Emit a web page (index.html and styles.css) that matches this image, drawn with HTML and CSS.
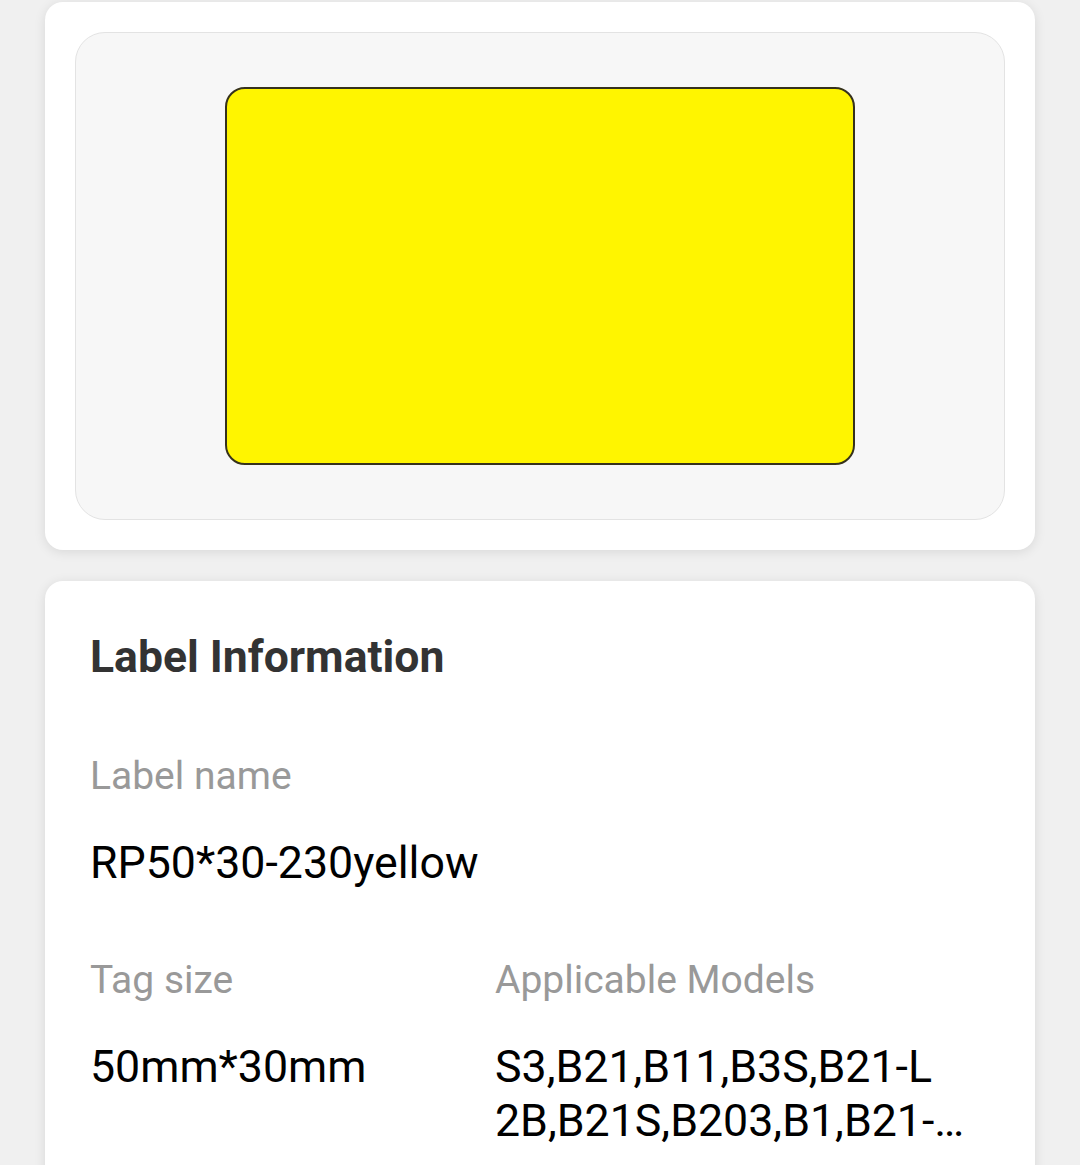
FILE: index.html
```html
<!DOCTYPE html>
<html lang="en">
<head>
<meta charset="utf-8">
<title>Label Information</title>
<link rel="stylesheet" href="styles.css">
</head>
<body>
<main class="page">
  <section class="card preview-card">
    <div class="preview-box">
      <div class="label-shape"></div>
    </div>
  </section>
  <section class="card info-card">
    <h2 class="info-title">Label Information</h2>
    <div class="field">
      <div class="field-label">Label name</div>
      <div class="field-value">RP50*30-230yellow</div>
    </div>
    <div class="field-row">
      <div class="field">
        <div class="field-label">Tag size</div>
        <div class="field-value">50mm*30mm</div>
      </div>
      <div class="field">
        <div class="field-label">Applicable Models</div>
        <div class="field-value models">
          <span class="models-line">S3,B21,B11,B3S,B21-L</span>
          <span class="models-line models-last">2B,B21S,B203,B1,B21-C2B,B21 Pro,B1 Pro</span>
        </div>
      </div>
    </div>
  </section>
</main>
</body>
</html>
```
FILE: styles.css
```css
html, body {
  margin: 0;
  padding: 0;
}
body {
  background: #f0f0f0;
  font-family: Roboto, "Noto Sans", "Liberation Sans", sans-serif;
}
.page {
  padding: 2px 45px 0;
  display: flex;
  flex-direction: column;
  gap: 31px;
}
.card {
  background: #ffffff;
  border-radius: 18px;
  box-shadow: 0 2px 12px rgba(0, 0, 0, 0.1);
}
.preview-card {
  padding: 30px;
}
.preview-box {
  height: 488px;
  box-sizing: border-box;
  border: 1px solid #e3e3e3;
  border-radius: 30px;
  background: #f7f7f7;
  display: flex;
  align-items: center;
  justify-content: center;
}
.label-shape {
  width: 630px;
  height: 378px;
  box-sizing: border-box;
  border: 2px solid #36321c;
  border-radius: 20px;
  background: #fff500;
}
.info-card {
  padding: 49px 45px 60px;
}
.info-title {
  margin: 0 0 69px;
  font-size: 44.5px;
  line-height: 54px;
  font-weight: 700;
  color: #333333;
}
.field-label {
  font-size: 39px;
  line-height: 46px;
  color: #999999;
}
.field-value {
  margin-top: 37px;
  font-size: 44.7px;
  line-height: 54px;
  color: #000000;
}
.field-row {
  margin-top: 67px;
  display: grid;
  grid-template-columns: 405px 470px;
}
.models {
  display: flex;
  flex-direction: column;
}
.models-line {
  display: block;
  white-space: nowrap;
  overflow: hidden;
  text-overflow: ellipsis;
}
```
